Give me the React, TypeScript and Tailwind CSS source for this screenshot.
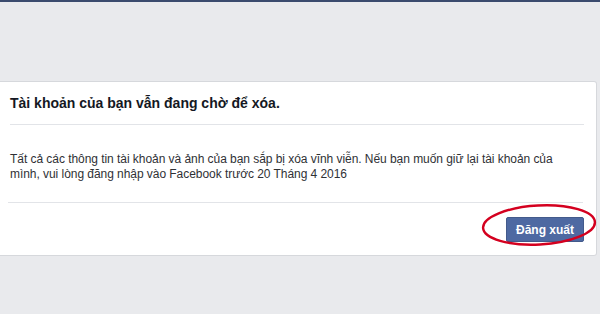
import React from 'react';

const App: React.FC = () => {
  return (
    <div className="w-[600px] h-[314px] bg-[#e9eaed] border-t-2 border-[#3b4b6e] font-['Liberation_Sans',Arial,sans-serif] overflow-hidden">
      <div className="pt-[79px]">
        <div className="w-[597px] h-[175px] bg-white border border-l-0 border-[#d6d8dc] rounded-r-[3px] flex flex-col">
          <div className="h-[42px] flex items-center px-[10px]">
            <h2 className="text-[14px] font-bold text-[#141823] leading-[18px]">
              Tài khoản của bạn vẫn đang chờ để xóa.
            </h2>
          </div>
          <div className="ml-[10px] mr-[12px] border-b border-[#e2e4e8]" />
          <div className="px-[10px] pt-[27px] pb-[20px]">
            <p className="text-[12px] leading-[15px] text-[#2f3135] tracking-[-0.05px]">
              Tất cả các thông tin tài khoản và ảnh của bạn sắp bị xóa vĩnh viễn. Nếu bạn muốn giữ lại tài khoản của
              <br />
              mình, vui lòng đăng nhập vào Facebook trước 20 Tháng 4 2016
            </p>
          </div>
          <div className="ml-[8px] mr-[13px] border-b border-[#e2e4e8]" />
          <div className="relative flex justify-end pr-[12px] pt-[14px]">
            <button className="w-[78px] h-[25px] bg-[#4e69a2] border border-[#435a8b] rounded-[2px] text-white text-[12px] font-bold leading-none">
              Đăng xuất
            </button>
            <svg
              className="absolute left-[480px] top-[-1px] pointer-events-none"
              width="120"
              height="46"
              viewBox="0 0 120 46"
            >
              <ellipse
                cx="59"
                cy="23"
                rx="56"
                ry="19.5"
                transform="rotate(-3 59 23)"
                fill="none"
                stroke="#d4001f"
                strokeWidth="2.4"
              />
            </svg>
          </div>
        </div>
      </div>
    </div>
  );
};

export default App;
